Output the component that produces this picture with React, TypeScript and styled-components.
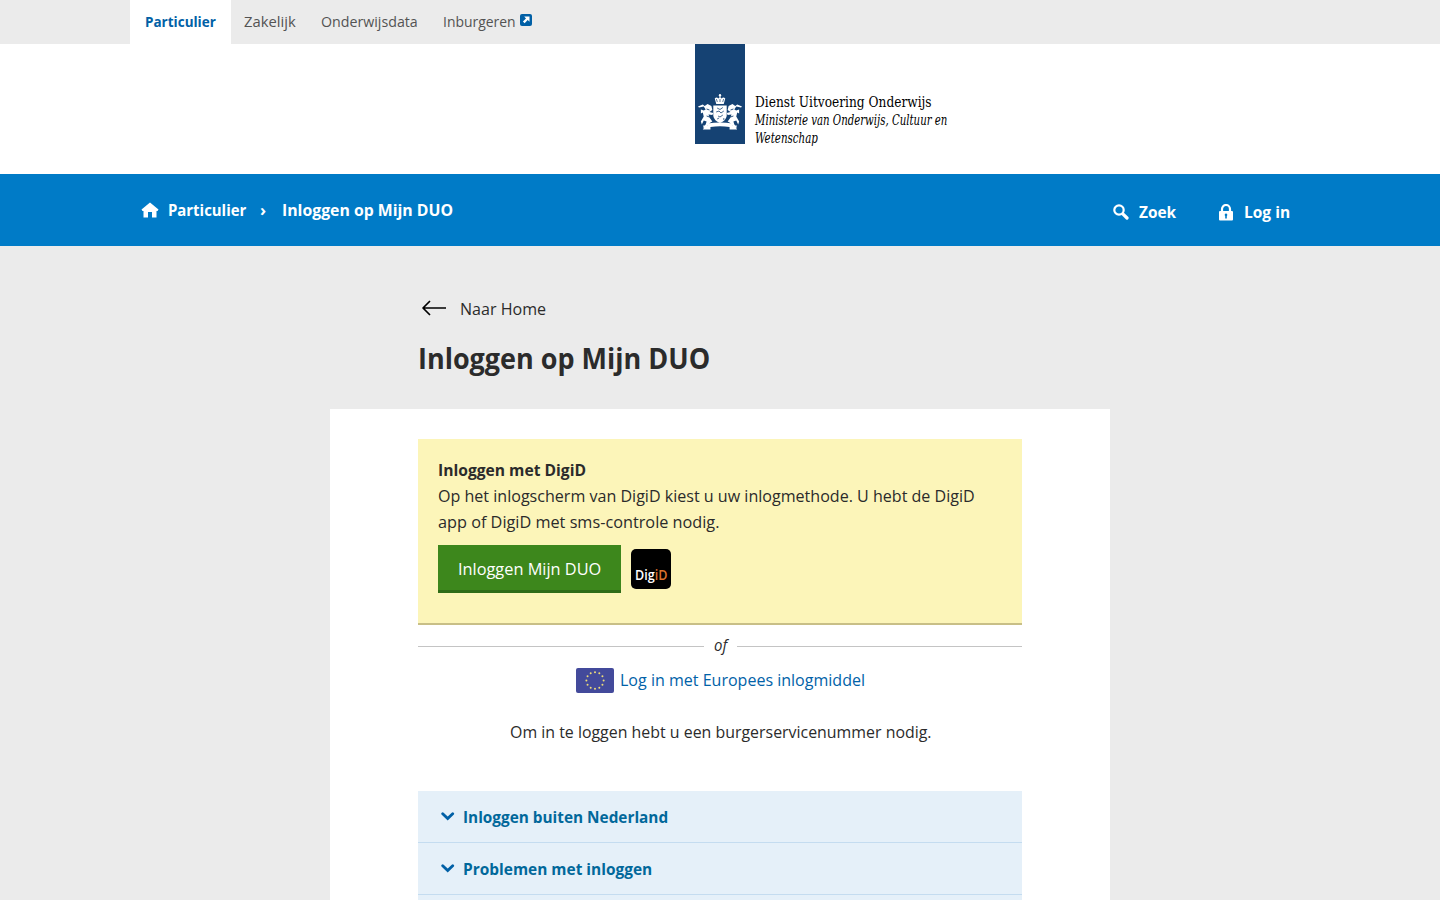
import React from 'react';
import styled, { createGlobalStyle } from 'styled-components';

const GlobalStyle = createGlobalStyle`
  * { box-sizing: border-box; }
  html, body { margin: 0; height: 900px; overflow: hidden; background: #ebebeb; }
  body {
    font-family: 'Open Sans', 'Noto Sans', sans-serif;
    font-size: 17px;
    line-height: 26px;
    color: #2b2b2b;
  }
  a { color: inherit; text-decoration: none; }
  h1, h2, p, ul { margin: 0; padding: 0; }
  ul { list-style: none; }
  svg { display: block; flex: none; }
`;

const Page = styled.div`
  height: 900px;
  overflow: hidden;
`;

/* Condensed text: the glyphs are narrowed by $squeeze to fill a box of $w pixels. */
const Label = styled.span<{ $w: number; $squeeze: number }>`
  display: inline-block;
  flex: none;
  width: ${p => p.$w}px;
  white-space: nowrap;
  text-align: left;
  transform: scaleX(${p => p.$squeeze});
  transform-origin: left center;
`;

const TopBar = styled.nav`
  height: 44px;
  padding-left: 130px;
  display: flex;
  gap: 25px;
  font-size: 14.5px;
  color: #535353;
`;

const Tab = styled.a<{ $active?: boolean }>`
  height: 44px;
  display: flex;
  align-items: center;
  gap: 4px;
  ${p => p.$active && `
    padding: 0 15px;
    margin-right: -12px;
    background: #fff;
    color: #0160a6;
    font-weight: 700;
  `}
`;

const Header = styled.header`
  height: 130px;
  padding-left: 695px;
  background: #fff;
  display: flex;
  gap: 10px;
`;

const Ribbon = styled.div`
  width: 50px;
  height: 100px;
  background: #154273;
  display: flex;
  align-items: flex-end;
  justify-content: center;
  padding-bottom: 13px;
`;

const Wordmark = styled.div`
  padding-top: 50px;
  font-family: 'DejaVu Serif', serif;
  font-stretch: condensed;
  font-size: 14px;
  line-height: 18px;
  color: #000;
  display: flex;
  flex-direction: column;
  span { line-height: 17px; }
`;

const NavBar = styled.nav`
  height: 72px;
  padding: 0 150px 0 141px;
  background: #007bc7;
  color: #fff;
  font-size: 16.5px;
  font-weight: 700;
  display: flex;
  justify-content: space-between;
`;

const Crumbs = styled.div`
  height: 72px;
  display: flex;
  align-items: center;
`;

const HomeSlot = styled.span`
  width: 27px;
`;

const Separator = styled.span`
  width: 36px;
  padding-left: 14px;
`;

const Actions = styled.div`
  height: 76px;
  display: flex;
  align-items: center;
  gap: 43px;
`;

const Action = styled.a<{ $gap: number }>`
  display: flex;
  align-items: center;
  gap: ${p => p.$gap}px;
`;

const Intro = styled.section`
  width: 604px;
  height: 163px;
  margin: 0 auto;
  padding-top: 50px;
`;

const BackLink = styled.a`
  display: flex;
  align-items: center;
  gap: 13px;
  padding-left: 3px;
  svg { margin-bottom: 2px; }
`;

const Title = styled.h1`
  margin-top: 16px;
  font-size: 28.5px;
  line-height: 40px;
  font-weight: 700;
`;

const Card = styled.main`
  width: 780px;
  height: 600px;
  margin: 0 auto;
  padding: 30px 88px;
  background: #fff;
`;

const DigidPanel = styled.section`
  height: 186px;
  padding: 18px 20px 0;
  background: #fcf5b9;
  border-bottom: 2px solid #c8bf87;
`;

const PanelTitle = styled.h2`
  font-size: 16.5px;
  line-height: 26px;
`;

const PanelText = styled.p`
  display: flex;
  flex-direction: column;
`;

const ButtonRow = styled.div`
  margin-top: 10px;
  display: flex;
  align-items: center;
  gap: 10px;
`;

const LoginButton = styled.a`
  width: 183px;
  height: 48px;
  display: flex;
  align-items: center;
  justify-content: center;
  background: #3d871c;
  border-bottom: 3px solid #2f6c18;
  padding-top: 3px;
  color: #fff;
`;

const DigidBadge = styled.span`
  width: 40px;
  height: 40px;
  border-radius: 5px;
  background: #000;
  color: #fff;
  font-size: 13.5px;
  line-height: 16px;
  font-weight: 600;
  display: flex;
  align-items: flex-end;
  justify-content: center;
  padding-bottom: 6px;
  b { color: #d9722e; font-weight: 600; }
`;

const Divider = styled.div`
  height: 42px;
  display: flex;
  align-items: center;
  gap: 10px;
  font-style: italic;
  &::before, &::after {
    content: '';
    flex: 1;
    height: 1px;
    margin-top: 1px;
    background: #c4c4c4;
  }
`;

const DividerWord = styled.span`
  margin-bottom: 2px;
  display: flex;
`;

const EuLink = styled.a`
  display: flex;
  justify-content: center;
  align-items: center;
  gap: 6px;
  color: #0162a8;
`;

const Note = styled.p`
  margin-top: 26px;
  text-align: center;
`;

const Accordion = styled.ul`
  margin-top: 46px;
`;

const AccordionItem = styled.li`
  height: 52px;
  padding: 1px 0 0 23px;
  display: flex;
  align-items: center;
  gap: 8px;
  background: #e5f0f9;
  border-bottom: 1px solid #c4dcf0;
  color: #01689b;
  font-size: 16.5px;
  font-weight: 700;
  svg { margin-bottom: 2px; }
`;

const CoatOfArms = () => (
  <svg width="44" height="38" viewBox="0 0 46 38" preserveAspectRatio="none" fill="#fff">
    <circle cx="23" cy="2.2" r="1.2" />
    <path d="M22.5 3h1v3h-1z" />
    <path d="M17.5 5.5q2-2 3.8 0 1.7-2 3.4 0 1.8-2 3.8 0l-1.6 5.5h-7.8z" />
    <path d="M19.2 6l1 3M23 6v3M26.8 6l-1 3" stroke="#154273" strokeWidth=".7" />
    <path d="M16 12.5h14v10.5q-1 5-7 7-6-2-7-7z" />
    <path d="M20 15l3 1.5 3-2M19 19l3-1 2 2 3-2M21 23l2 1 3-2M20 26l2-1M27 25v2" fill="none" stroke="#154273" strokeWidth=".8" />
    <path d="M7 13l3-2 4 2 1 4-3 2 4 1-1 2-4-.5 1 3 3 4-2 1-3 3 2 2H5l3-3 1-3-3-1-2 4-1-3 3-5-1-4-2 1v-4l3 1 2-1-2-3-5 1-1-1 5-2z" />
    <path d="M39 13l-3-2-4 2-1 4 3 2-4 1 1 2 4-.5-1 3-3 4 2 1 3 3-2 2h7l-3-3-1-3 3-1 2 4 1-3-3-5 1-4 2 1v-4l-3 1-2-1 2-3 5 1 1-1-5-2z" />
    <path d="M9 16l3 1M9 23l3 1M37 16l-3 1M37 23l-3 1" stroke="#154273" strokeWidth=".9" />
    <path d="M10 30.5q13-2 26 0v2.5l5-.5-1.5 2 1.5 2h-8v-2.5q-10-1.5-20 0v2.5h-8l1.5-2-1.5-2 5 .5z" />
  </svg>
);

const ExternalSvg = styled.svg`
  margin-top: -4px;
`;

const ExternalIcon = () => (
  <ExternalSvg width="12" height="12" viewBox="0 0 12 12">
    <rect width="12" height="12" rx="2" fill="#0160a6" />
    <path d="M4.2 2.5h5.3v5.3L7.7 6 4.6 9.2 2.9 7.5 6 4.4z" fill="#fff" />
  </ExternalSvg>
);

const HomeIcon = () => (
  <svg width="18" height="16" viewBox="0 0 18 16" fill="#fff">
    <path d="M9 .5.5 7.5 1.5 9H2.5V15.5H7V10h4v5.5h4.5V9h1L17.5 7.5z" />
  </svg>
);

const SearchIcon = () => (
  <svg width="16" height="16" viewBox="0 0 16 16" fill="none" stroke="#fff">
    <circle cx="6" cy="6" r="4.7" strokeWidth="2.2" />
    <path d="M9.8 9.8l4.2 4.2" strokeWidth="3.2" strokeLinecap="round" />
  </svg>
);

const LockIcon = () => (
  <svg width="14" height="17" viewBox="0 0 14 17">
    <path d="M3 8V5a4 4 0 0 1 8 0v3" fill="none" stroke="#fff" strokeWidth="2.2" />
    <rect y="7" width="14" height="9.5" rx="1" fill="#fff" />
    <path d="M7 9.5a1.4 1.4 0 0 1 .8 2.5v2.5H6.2V12A1.400 1.4 0 0 1 7 9.500z" fill="#007bc7" />
  </svg>
);

const ArrowIcon = () => (
  <svg width="26" height="16" viewBox="0 0 26 16" fill="none" stroke="#000" strokeWidth="1.7">
    <path d="M9 1L2 8l7 7M2 8h23" strokeLinejoin="round" />
  </svg>
);

const ChevronIcon = () => (
  <svg width="14" height="9" viewBox="0 0 14 9" fill="none" stroke="#0160a6" strokeWidth="2.8">
    <path d="M1.700 1.700l5 4.800 5-4.800" strokeLinecap="round" />
  </svg>
);

const stars = Array.from({ length: 12 }, (_, i) => (i * Math.PI) / 6);

const EuFlag = () => (
  <svg width="38" height="25" viewBox="0 0 38 25">
    <rect width="38" height="25" rx="2" fill="#434a9b" />
    {stars.map(a => (
      <circle key={a} cx={19 + 8.6 * Math.sin(a)} cy={12.5 - 8.3 * Math.cos(a)} r="1" fill="#eddc79" />
    ))}
  </svg>
);

const topics = [
  { text: 'Inloggen buiten Nederland', width: 205, squeeze: 0.93 },
  { text: 'Problemen met inloggen', width: 189, squeeze: 0.936 },
];

export default function App() {
  return (
    <Page>
      <GlobalStyle />
      <TopBar>
        <Tab $active href="#"><Label $w={71} $squeeze={0.93}>Particulier</Label></Tab>
        <Tab href="#"><Label $w={52} $squeeze={1.02}>Zakelijk</Label></Tab>
        <Tab href="#"><Label $w={97} $squeeze={0.98}>Onderwijsdata</Label></Tab>
        <Tab href="#"><Label $w={73} $squeeze={0.96}>Inburgeren</Label><ExternalIcon /></Tab>
      </TopBar>
      <Header>
        <Ribbon><CoatOfArms /></Ribbon>
        <Wordmark>
          <Label $w={177} $squeeze={0.968}>Dienst Uitvoering Onderwijs</Label>
          <Label as="em" $w={192} $squeeze={0.808}>Ministerie van Onderwijs, Cultuur en</Label>
          <Label as="em" $w={63} $squeeze={0.815}>Wetenschap</Label>
        </Wordmark>
      </Header>
      <NavBar>
        <Crumbs>
          <HomeSlot><HomeIcon /></HomeSlot>
          <Label as="a" href="#" $w={78} $squeeze={0.903}>Particulier</Label>
          <Separator>›</Separator>
          <Label $w={171} $squeeze={0.958}>Inloggen op Mijn DUO</Label>
        </Crumbs>
        <Actions>
          <Action $gap={10} href="#"><SearchIcon /><Label $w={37} $squeeze={0.935}>Zoek</Label></Action>
          <Action $gap={11} href="#"><LockIcon /><Label $w={46} $squeeze={0.94}>Log in</Label></Action>
        </Actions>
      </NavBar>
      <Intro>
        <BackLink href="#"><ArrowIcon /><Label $w={86} $squeeze={0.945}>Naar Home</Label></BackLink>
        <Title><Label $w={292} $squeeze={0.947}>Inloggen op Mijn DUO</Label></Title>
      </Intro>
      <Card>
        <DigidPanel>
          <PanelTitle><Label $w={148} $squeeze={0.947}>Inloggen met DigiD</Label></PanelTitle>
          <PanelText>
            <Label $w={537} $squeeze={0.945}>Op het inlogscherm van DigiD kiest u uw inlogmethode. U hebt de DigiD</Label>
            <Label $w={281} $squeeze={0.956}>app of DigiD met sms-controle nodig.</Label>
          </PanelText>
          <ButtonRow>
            <LoginButton href="#"><Label $w={143} $squeeze={0.96}>Inloggen Mijn DUO</Label></LoginButton>
            <DigidBadge><Label $w={32} $squeeze={0.93}>Dig<b>iD</b></Label></DigidBadge>
          </ButtonRow>
        </DigidPanel>
        <Divider><DividerWord><Label $w={13} $squeeze={0.88}>of</Label></DividerWord></Divider>
        <EuLink href="#"><EuFlag /><Label $w={245} $squeeze={0.943}>Log in met Europees inlogmiddel</Label></EuLink>
        <Note><Label $w={421} $squeeze={0.936}>Om in te loggen hebt u een burgerservicenummer nodig.</Label></Note>
        <Accordion>
          {topics.map(t => (
            <AccordionItem key={t.text}>
              <ChevronIcon />
              <Label $w={t.width} $squeeze={t.squeeze}>{t.text}</Label>
            </AccordionItem>
          ))}
          <AccordionItem />
        </Accordion>
      </Card>
    </Page>
  );
}
